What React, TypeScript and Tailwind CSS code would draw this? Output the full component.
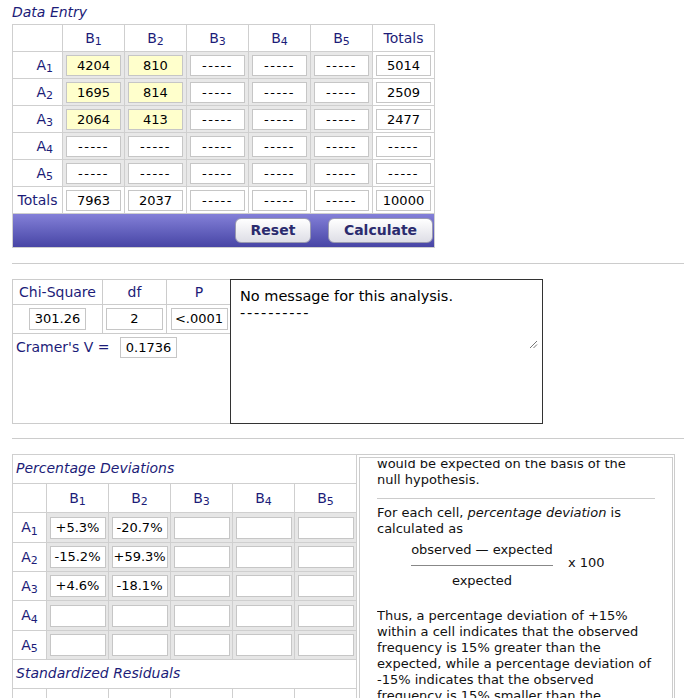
import React from 'react';

const navy = 'text-[#1c1c78]';
const font = "font-['DejaVu_Sans','Verdana',sans-serif]";

type Val = { v: string; yellow?: boolean };

const entry: Val[][] = [
  [{ v: '4204', yellow: true }, { v: '810', yellow: true }, { v: '-----' }, { v: '-----' }, { v: '-----' }, { v: '5014' }],
  [{ v: '1695', yellow: true }, { v: '814', yellow: true }, { v: '-----' }, { v: '-----' }, { v: '-----' }, { v: '2509' }],
  [{ v: '2064', yellow: true }, { v: '413', yellow: true }, { v: '-----' }, { v: '-----' }, { v: '-----' }, { v: '2477' }],
  [{ v: '-----' }, { v: '-----' }, { v: '-----' }, { v: '-----' }, { v: '-----' }, { v: '-----' }],
  [{ v: '-----' }, { v: '-----' }, { v: '-----' }, { v: '-----' }, { v: '-----' }, { v: '-----' }],
];
const totals = ['7963', '2037', '-----', '-----', '-----', '10000'];

const pct = [
  ['+5.3%', '-20.7%', '', '', ''],
  ['-15.2%', '+59.3%', '', '', ''],
  ['+4.6%', '-18.1%', '', '', ''],
  ['', '', '', '', ''],
  ['', '', '', '', ''],
];
const pctRowH = ['h-[29px]', 'h-[28px]', 'h-[28px]', 'h-[29px]', 'h-[28px]'];

function Box({ value, yellow, w = 'w-[55px]', h = 'h-[21px]' }: { value: string; yellow?: boolean; w?: string; h?: string }) {
  const dashes = value === '-----';
  return (
    <div
      className={`${w} ${h} border border-[#c6c6c6] ${yellow ? 'bg-[#ffffcc]' : 'bg-white'} text-[13px] leading-[19px] text-black text-center whitespace-nowrap overflow-hidden px-px ${dashes ? 'tracking-[1.5px]' : ''}`}
    >
      {value}
    </div>
  );
}

function Sub({ l, n }: { l: string; n: number }) {
  return (
    <span>
      {l}
      <sub className="text-[11px]">{n}</sub>
    </span>
  );
}

function Grip() {
  return (
    <svg width="9" height="9" viewBox="0 0 9 9" className="absolute left-[298px] top-[60px]">
      <path d="M1 8 L8 1 M4.5 8 L8 4.5" stroke="#777" strokeWidth="1" fill="none" />
    </svg>
  );
}

export default function App() {
  return (
    <div className={`${font} bg-white w-[684px] min-h-[698px] text-[13px]`}>
      {/* Data entry */}
      <div className={`pl-3 pt-[3px] h-[24px] italic text-[14px] leading-[18px] ${navy}`}>Data Entry</div>
      <div className="ml-3 w-[423px] border border-[#cfcfcf] bg-[#cfcfcf] grid grid-cols-[49px_repeat(6,61px)] grid-rows-[26px_repeat(6,26px)_33px] gap-px">
        <div className="bg-white" />
        {[1, 2, 3, 4, 5].map((n) => (
          <div key={n} className={`bg-white flex items-center justify-center text-[14px] ${navy}`}>
            <Sub l="B" n={n} />
          </div>
        ))}
        <div className={`bg-white flex items-center justify-center text-[14px] ${navy}`}>Totals</div>
        {entry.map((row, r) => (
          <React.Fragment key={r}>
            <div className={`bg-white flex items-center justify-end pr-[9px] text-[14px] ${navy}`}>
              <Sub l="A" n={r + 1} />
            </div>
            {row.map((c, i) => (
              <div key={i} className={`${i === 5 ? 'bg-white' : 'bg-[#e8e8e8]'} flex items-center justify-center`}>
                <Box value={c.v} yellow={c.yellow} />
              </div>
            ))}
          </React.Fragment>
        ))}
        <div className={`bg-white flex items-center justify-center text-[14px] ${navy}`}>Totals</div>
        {totals.map((t, i) => (
          <div key={i} className="bg-white flex items-center justify-center">
            <Box value={t} />
          </div>
        ))}
        <div className="col-span-7 bg-gradient-to-b from-[#8480d8] to-[#4845a5] flex items-center justify-end gap-[17px] pr-[1px]">
          <button className="w-[76px] h-[25px] rounded-[6px] border border-[#9a9ab0] bg-gradient-to-b from-white to-[#dedee6] text-[14px] font-bold text-[#2b2b6e]">
            Reset
          </button>
          <button className="w-[105px] h-[25px] rounded-[6px] border border-[#9a9ab0] bg-gradient-to-b from-white to-[#dedee6] text-[14px] font-bold text-[#2b2b6e]">
            Calculate
          </button>
        </div>
      </div>

      <div className="ml-3 mt-[15px] h-px bg-[#cccccc]" />

      {/* Chi-square */}
      <div className="ml-3 mt-[15px] flex">
        <div className="w-[218px] h-[145px] border border-r-0 border-[#cccccc] flex flex-col">
          <div className="grid grid-cols-[89px_63px_64px] gap-px bg-[#cccccc] border-b border-[#cccccc]">
            <div className={`bg-white h-[24px] flex items-center justify-center text-[14px] ${navy}`}>Chi-Square</div>
            <div className={`bg-white h-[24px] flex items-center justify-center text-[14px] ${navy}`}>df</div>
            <div className={`bg-white h-[24px] flex items-center justify-center text-[14px] ${navy}`}>P</div>
            <div className="bg-white h-[28px] flex items-center justify-center">
              <Box value="301.26" w="w-[57px]" h="h-[22px]" />
            </div>
            <div className="bg-white h-[28px] flex items-center justify-center">
              <Box value="2" w="w-[57px]" h="h-[22px]" />
            </div>
            <div className="bg-white h-[28px] flex items-center justify-center">
              <Box value="<.0001" w="w-[57px]" h="h-[22px]" />
            </div>
          </div>
          <div className={`flex items-center pl-[3px] pt-[3px] text-[14px] ${navy}`}>
            <span className="w-[104px]">Cramer's V =</span>
            <Box value="0.1736" w="w-[57px]" h="h-[21px]" />
          </div>
        </div>
        <div className="relative w-[313px] h-[145px] border border-[#333333] px-[9px] pt-[8px] text-[14.5px] leading-[17px] text-black">
          <div>No message for this analysis.</div>
          <div className="tracking-[1.8px]">----------</div>
          <Grip />
        </div>
      </div>

      <div className="ml-3 mt-[14px] h-px bg-[#cccccc]" />

      {/* Percentage deviations */}
      <div className="ml-3 mt-[15px] flex items-start">
        <div className="w-[345px] border border-[#cfcfcf] bg-[#cfcfcf] grid grid-cols-[33px_repeat(5,61px)] gap-px">
          <div className={`col-span-6 bg-white h-[28px] flex items-center pl-[3px] pb-[2px] italic text-[14px] ${navy}`}>
            Percentage Deviations
          </div>
          <div className="bg-white h-[28px]" />
          {[1, 2, 3, 4, 5].map((n) => (
            <div key={n} className={`bg-white h-[28px] flex items-center justify-center text-[14px] ${navy}`}>
              <Sub l="B" n={n} />
            </div>
          ))}
          {pct.map((row, r) => (
            <React.Fragment key={r}>
              <div className={`bg-white ${pctRowH[r]} flex items-center justify-center text-[14px] ${navy}`}>
                <Sub l="A" n={r + 1} />
              </div>
              {row.map((v, i) => (
                <div key={i} className={`bg-[#e6e6e6] ${pctRowH[r]} flex items-center justify-center`}>
                  <Box value={v} w="w-[56px]" h="h-[22px]" />
                </div>
              ))}
            </React.Fragment>
          ))}
          <div className={`col-span-6 bg-white h-[28px] flex items-center pl-[3px] pb-[2px] italic text-[14px] ${navy}`}>
            Standardized Residuals
          </div>
          <div className="bg-white h-[28px]" />
          {[1, 2, 3, 4, 5].map((n) => (
            <div key={n} className={`bg-white h-[28px] flex items-center justify-center text-[14px] ${navy}`}>
              <Sub l="B" n={n} />
            </div>
          ))}
        </div>

        <div className="w-[318px] border-t border-r border-[#cccccc] pt-[2px] pl-[2px] pr-[1px]">
          <div className="h-[300px] border border-[#cccccc] px-[17px] text-[13px] leading-[16px] text-[#111111] whitespace-nowrap">
            <div className="mt-[2px] h-[290px] overflow-hidden">
              <div className="-mt-[4px]">
                <p>
                  would be expected on the basis of the
                  <br />
                  null hypothesis.
                </p>
                <div className="mt-[10px] mb-[6px] h-px bg-[#cccccc]" />
                <p>
                  For each cell, <i>percentage deviation</i> is
                  <br />
                  calculated as
                </p>
                <div className="mt-[5px] ml-[34px] flex items-center">
                  <div className="w-[142px] flex flex-col items-center">
                    <div>observed — expected</div>
                    <div className="mt-[7px] mb-[7px] w-full h-px bg-[#888888]" />
                    <div>expected</div>
                  </div>
                  <div className="ml-[15px] -mt-[6px]">x 100</div>
                </div>
                <p className="mt-[19px]">
                  Thus, a percentage deviation of +15%
                  <br />
                  within a cell indicates that the observed
                  <br />
                  frequency is 15% greater than the
                  <br />
                  expected, while a percentage deviation of
                  <br />
                  -15% indicates that the observed
                  <br />
                  frequency is 15% smaller than the
                  <br />
                  expected.
                </p>
              </div>
            </div>
          </div>
        </div>
      </div>
    </div>
  );
}
